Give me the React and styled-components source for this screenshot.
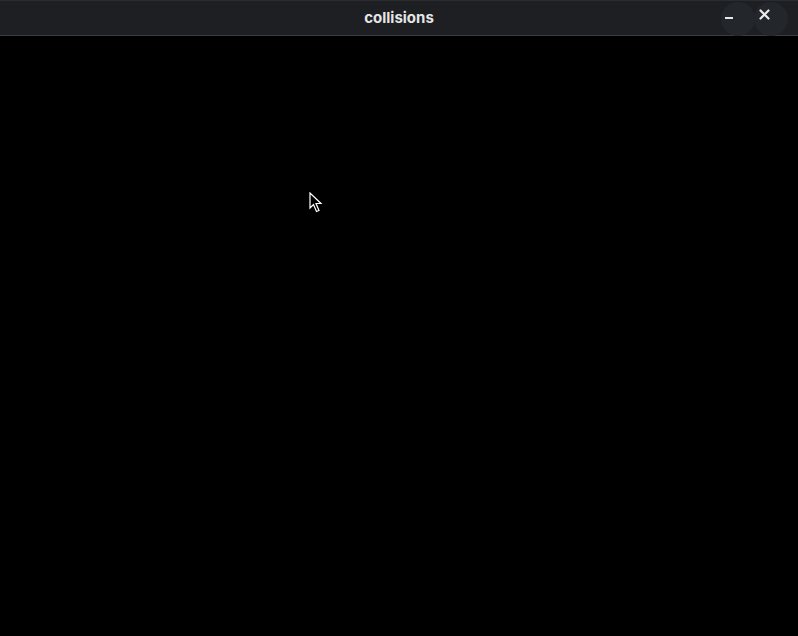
import React from 'react'
import styled, { createGlobalStyle } from 'styled-components'

const GlobalStyle = createGlobalStyle`
  html, body {
    margin: 0;
    padding: 0;
    background: #000000;
    height: 100%;
  }
  #root {
    height: 100%;
  }
`

const Window = styled.div`
  position: relative;
  width: 798px;
  height: 636px;
  display: flex;
  flex-direction: column;
  background: #000000;
  overflow: hidden;
`

const TitleBar = styled.div`
  position: relative;
  height: 36px;
  flex-shrink: 0;
  display: flex;
  align-items: center;
  justify-content: center;
  background: #1d1f23;
  border-top: 1px solid #2a2c30;
  border-bottom: 1px solid #3a3c40;
  box-sizing: border-box;
  padding-bottom: 2px;
`

const Title = styled.div`
  font-family: Inter, 'Noto Sans', 'Liberation Sans', sans-serif;
  font-weight: 700;
  font-size: 15px;
  color: #e6e6e6;
`

const Controls = styled.div`
  position: absolute;
  right: 10px;
  top: 1px;
  display: flex;
  align-items: center;
`

const CtrlButton = styled.div`
  width: 34px;
  height: 34px;
  border-radius: 50%;
  background: #23262a;
  margin-left: ${(p) => (p.$first ? '0' : '-1px')};
  display: flex;
  align-items: ${(p) => (p.$top ? 'flex-start' : 'center')};
  justify-content: flex-start;
  padding-top: ${(p) => (p.$top ? '7px' : '0')};
  padding-left: ${(p) => p.$pl || '0'};
  box-sizing: border-box;
`

const Canvas = styled.div`
  flex: 1;
  background: #000000;
`

const Cursor = styled.svg`
  position: absolute;
  left: 309px;
  top: 192px;
`

export default function App() {
  return (
    <>
      <GlobalStyle />
      <Window>
        <TitleBar>
          <Title>collisions</Title>
          <Controls>
            <CtrlButton $first $pl="3px">
              <svg width="10" height="4" viewBox="0 0 10 4">
                <rect x="1" y="0" width="8" height="2" fill="#e8e8e8" />
              </svg>
            </CtrlButton>
            <CtrlButton $top $pl="5px">
              <svg width="11" height="11" viewBox="0 0 11 11">
                <path d="M1.5 1.5 L9.5 9.5 M9.5 1.5 L1.5 9.5" stroke="#ececec" strokeWidth="2.2" strokeLinecap="round" />
              </svg>
            </CtrlButton>
          </Controls>
        </TitleBar>
        <Canvas />
        <Cursor width="14" height="22" viewBox="0 0 14 22">
          <path
            d="M1 1 L1 16 L4.5 12.5 L7.5 19.5 L10 18.5 L7 11.5 L12 11.5 Z"
            fill="#000000"
            stroke="#ffffff"
            strokeWidth="1.2"
            strokeLinejoin="miter"
          />
        </Cursor>
      </Window>
    </>
  )
}
